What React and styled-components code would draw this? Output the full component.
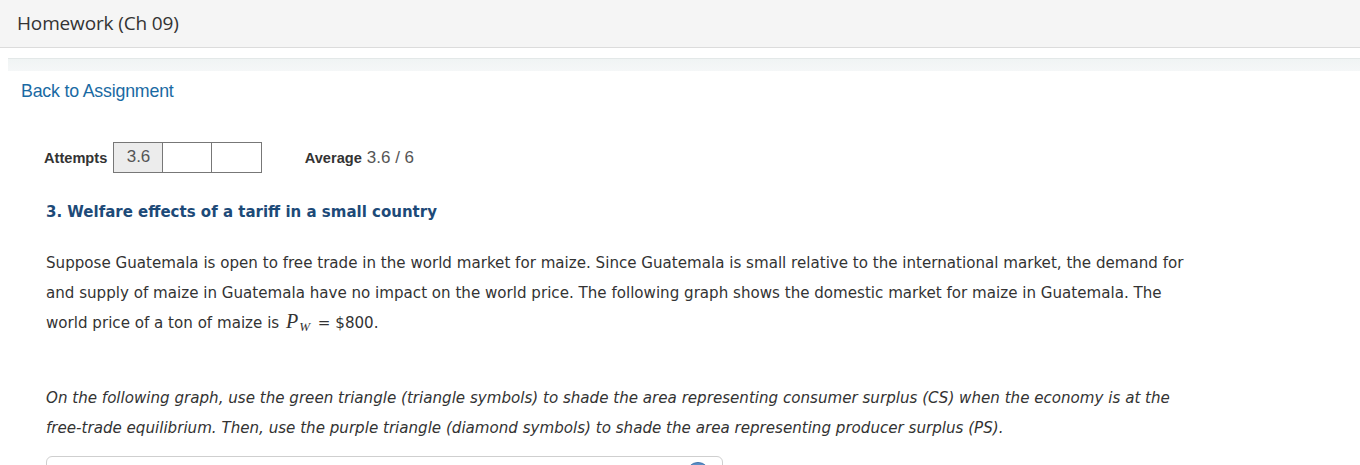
import React from 'react'
import styled, { createGlobalStyle } from 'styled-components';

const GlobalStyle = createGlobalStyle`
  body {
    margin: 0;
    background: #fff;
    font-family: "Liberation Sans", Arial, sans-serif;
  }
`;

const Header = styled.header`
  height: 47px;
  background: #f5f5f5;
  border-bottom: 1px solid #dcdcdc;
  display: flex;
  align-items: center;
  padding-left: 17px;
`;

const Title = styled.h1`
  margin: 0;
  font-family: "Open Sans", sans-serif;
  font-weight: 400;
  font-size: 19px;
  color: #333;
  letter-spacing: -0.15px;
  position: relative;
  top: -1px;
`;

const Page = styled.main`
  padding: 10px 0 0 8px;
`;

const Band = styled.div`
  height: 12px;
  border-top: 1px solid #e3e8e8;
  background: linear-gradient(#f0f4f4, #f5f7f8);
`;

const Body = styled.div`
  padding-left: 13px;
`;

const BackLink = styled.a`
  display: block;
  margin-top: 9px;
  font-size: 17.8px;
  color: #1a6aa3;
  text-decoration: none;
  line-height: 22px;
  letter-spacing: -0.2px;
`;

const Question = styled.section`
  padding-left: 23px;
`;

const AttemptsRow = styled.div`
  display: flex;
  align-items: center;
  margin-top: 39px;
  height: 33px;
`;

const Label = styled.span`
  font-size: 14.6px;
  font-weight: 700;
  color: #333;
  margin-right: 6px;
`;

const Boxes = styled.div`
  display: flex;
`;

const Box = styled.div`
  width: 48.5px;
  border: 1.5px solid #777;
  margin-left: ${({ first }) => (first ? '0' : '-1.5px')};
  background: ${({ filled }) => (filled ? '#ececec' : '#fff')};
  color: #555;
  font-size: 17px;
  display: flex;
  justify-content: center;
  padding-top: 4px;
  height: 25px;
`;

const Average = styled.div`
  margin-left: 43px;
  display: flex;
  align-items: baseline;
  color: #555;
  font-size: 17px;
`;

const AvgLabel = styled.span`
  font-size: 14.6px;
  font-weight: 700;
  color: #333;
  margin-right: 5px;
`;

const Heading = styled.h2`
  margin: 28px 0 0 2px;
  font-family: "DejaVu Sans", Verdana, sans-serif;
  font-size: 15px;
  font-weight: 700;
  color: #1d4a78;
  line-height: 20px;
`;

const Text = styled.p`
  margin: ${({ top }) => top}px 0 0 2px;
  width: 1160px;
  font-family: "DejaVu Sans", Verdana, sans-serif;
  font-size: 15.1px;
  line-height: 30px;
  color: #333;
  font-style: ${({ italic }) => (italic ? 'italic' : 'normal')};
`;

const MathVar = styled.span`
  font-family: "Liberation Serif", "Times New Roman", serif;
  font-style: italic;
  font-size: 20px;
  line-height: 0;
  margin: 0 3px 0 2px;
  sub {
    font-size: 13px;
    line-height: 0;
    vertical-align: -3px;
    margin-left: 1px;
  }
`;

const GraphCard = styled.div`
  margin: 13px 0 0 2px;
  width: 675px;
  height: 40px;
  border: 1px solid #cfcfcf;
  border-radius: 6px;
  position: relative;
`;

const HelpDot = styled.div`
  position: absolute;
  top: 5px;
  right: 12px;
  width: 22px;
  height: 22px;
  border-radius: 50%;
  background: #5c8fc6;
  border: 1px solid #3f73ad;
`;

function App() {
  return (
    <>
      <GlobalStyle />
      <Header>
        <Title>Homework (Ch 09)</Title>
      </Header>
      <Page>
        <Band />
        <Body>
          <BackLink href="#">Back to Assignment</BackLink>
          <Question>
            <AttemptsRow>
              <Label>Attempts</Label>
              <Boxes>
                <Box first filled>3.6</Box>
                <Box />
                <Box />
              </Boxes>
              <Average>
                <AvgLabel>Average</AvgLabel>3.6 / 6
              </Average>
            </AttemptsRow>
            <Heading>3. Welfare effects of a tariff in a small country</Heading>
            <Text top={26}>
              Suppose Guatemala is open to free trade in the world market for maize. Since Guatemala is small relative to the international market, the demand for and supply of maize in Guatemala have no impact on the world price. The following graph shows the domestic market for maize in Guatemala. The world price of a ton of maize is <MathVar>P<sub>W</sub></MathVar> = $800.
            </Text>
            <Text top={45} italic>
              On the following graph, use the green triangle (triangle symbols) to shade the area representing consumer surplus (CS) when the economy is at the free-trade equilibrium. Then, use the purple triangle (diamond symbols) to shade the area representing producer surplus (PS).
            </Text>
            <GraphCard>
              <HelpDot />
            </GraphCard>
          </Question>
        </Body>
      </Page>
    </>
  )
}

export default App
